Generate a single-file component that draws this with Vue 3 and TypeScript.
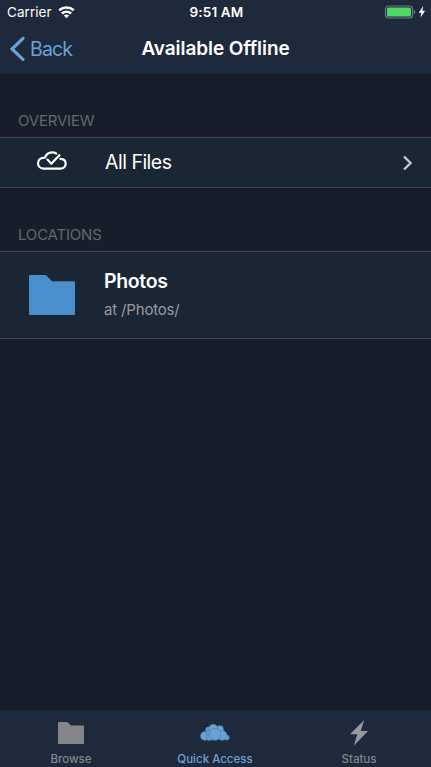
<script setup lang="ts">
interface Tab {
  id: string
  label: string
  active: boolean
}

const tabs: Tab[] = [
  { id: 'browse', label: 'Browse', active: false },
  { id: 'quick', label: 'Quick Access', active: true },
  { id: 'status', label: 'Status', active: false },
]
</script>

<template>
  <div class="screen">
    <header class="top">
      <div class="status-bar">
        <div class="side">
          <span class="carrier">Carrier</span>
          <svg class="wifi" width="17" height="13" viewBox="0 0 17 13">
            <g fill="none" stroke="#fff" stroke-width="2.5">
              <path d="M1.2 4.3C5.4 .6 11.6 .6 15.8 4.3" />
              <path d="M3.9 7.5C6.6 5.1 10.4 5.1 13.1 7.5" />
            </g>
            <path d="M5.8 9.5C7.4 8.1 9.6 8.1 11.2 9.5L8.5 12.2Z" fill="#fff" />
          </svg>
        </div>
        <span class="clock">9:51 AM</span>
        <div class="side right">
          <svg width="42" height="14" viewBox="0 0 42 14">
            <rect x="1.5" y="1" width="27" height="12" rx="3" fill="none" stroke="#737885" stroke-width="1.2" />
            <rect x="3" y="2.5" width="24" height="9" rx="1.5" fill="#4cd964" />
            <path d="M29.8 4.8C31.8 5.5 31.8 8.5 29.8 9.2Z" fill="#737885" />
            <path d="M39.3 1L34.6 7.8H37.4L36.4 12.6L41.2 5.7H38.3Z" fill="#fff" />
          </svg>
        </div>
      </div>
      <nav class="nav-bar">
        <button class="back">
          <svg width="16" height="26" viewBox="0 0 16 26">
            <path d="M14 2.3L3 13L14 23.3" fill="none" stroke="#66a3d9" stroke-width="3.2" stroke-linecap="round" />
          </svg>
          <span class="back-label">Back</span>
        </button>
        <h1><span class="title">Available Offline</span></h1>
      </nav>
    </header>

    <main>
      <h2 class="first"><span class="overview">OVERVIEW</span></h2>
      <section class="row all-files">
        <div class="icon-cell">
          <svg width="32" height="22" viewBox="0 0 32 22">
            <g fill="none" stroke="#fff" stroke-width="2.2" stroke-linecap="round" stroke-linejoin="round">
              <path d="M20.2 3.5C18.2 2.3 16.2 2.1 14.4 2.6C11.6 3.3 9.7 5.3 9 7.6C4.8 7.6 2 9.8 2 13C2 16.3 4.6 18.6 8 18.6H24.3C27.5 18.6 29.7 16.6 29.7 13.8C29.7 11 27.7 9 24.4 8.9" />
              <path d="M11.4 9.6L15.3 13.7L23.4 5.2" />
            </g>
          </svg>
        </div>
        <span class="files-label">All Files</span>
        <svg class="chevron" width="11" height="18" viewBox="0 0 11 18">
          <path d="M2 2.5L8.6 9L2 15.5" fill="none" stroke="#c6cbd2" stroke-width="2.3" />
        </svg>
      </section>

      <h2><span class="locations">LOCATIONS</span></h2>
      <section class="row location">
        <div class="icon-cell">
          <svg width="46" height="40" viewBox="0 0 46 40">
            <path d="M1.2 0H16.2Q17 0 17.6.7L23 6.3H44.8Q46 6.3 46 7.5V38.8Q46 40 44.8 40H1.2Q0 40 0 38.8V1.2Q0 0 1.2 0Z" fill="#488fcb" />
          </svg>
        </div>
        <div class="details">
          <span class="name">Photos</span>
          <span class="path">at /Photos/</span>
        </div>
      </section>
    </main>

    <footer>
      <button v-for="tab in tabs" :key="tab.id" class="tab" :class="[tab.id, { active: tab.active }]">
        <span class="glyph">
          <svg v-if="tab.id === 'browse'" width="26" height="22" viewBox="0 0 26 22">
            <path d="M.6 0H9.3L13 3.5H25.4Q26 3.5 26 4.1V21.4Q26 22 25.4 22H.6Q0 22 0 21.4V.6Q0 0 .6 0Z" fill="#85868a" />
          </svg>
          <svg v-else-if="tab.id === 'quick'" width="30" height="18" viewBox="0 0 30 18">
            <g fill="#69a3d5" stroke="#3f6a95" stroke-width=".5">
              <circle cx="8.7" cy="6" r="3.2" />
              <circle cx="19.7" cy="5.5" r="3.9" />
              <circle cx="13.3" cy="4.8" r="4.5" />
              <circle cx="4.9" cy="11.9" r="4.5" />
              <circle cx="9.1" cy="9.3" r="3.2" />
              <circle cx="9.6" cy="13.2" r="3.4" />
              <circle cx="26.6" cy="13.5" r="2.7" />
              <circle cx="22.2" cy="11.5" r="4.9" />
              <circle cx="15" cy="10.5" r="6" />
            </g>
          </svg>
          <svg v-else width="20" height="26" viewBox="0 0 20 26">
            <path d="M15.2 0L1 14.3H8.2L5 25.5L19 10.9H11.7Z" fill="#97999e" />
          </svg>
        </span>
        <span class="tab-label">{{ tab.label }}</span>
      </button>
    </footer>
  </div>
</template>

<style>
body {
  background: #171d2b;
}
</style>

<style scoped>
.screen {
  box-sizing: border-box;
  height: 100vh;
  display: flex;
  flex-direction: column;
  overflow: hidden;
  background: #171d2b;
  color: #fff;
  font-family: Inter, "Liberation Sans", sans-serif;
  white-space: nowrap;
}
svg {
  display: block;
  flex: none;
}
button {
  background: none;
  border: 0;
  padding: 0;
  font: inherit;
  color: inherit;
}
.top {
  height: 74px;
  box-sizing: border-box;
  background: #1e293b;
  border-bottom: 1px solid #19232f;
}
.status-bar {
  height: 24px;
  padding: 0 5px 0 7px;
  display: grid;
  grid-template-columns: 1fr auto 1fr;
  align-items: center;
  font-size: 13.5px;
}
.side {
  display: flex;
  align-items: center;
  gap: 6px;
}
.side.right {
  justify-content: flex-end;
}
.carrier {
  letter-spacing: 0.05px;
}
.clock {
  font-weight: 600;
  letter-spacing: 0.15px;
}
.nav-bar {
  height: 49px;
  display: grid;
  grid-template-columns: 1fr auto 1fr;
  align-items: center;
}
.back {
  display: flex;
  align-items: center;
  gap: 5px;
  padding-left: 9px;
  color: #66a3d9;
  font-size: 19.5px;
  letter-spacing: -0.85px;
}
h1 {
  margin: 0;
  font-size: 19px;
  font-weight: 600;
  letter-spacing: -0.08px;
}
h2 {
  margin: 0;
  height: 63px;
  box-sizing: border-box;
  padding: 38px 0 0 18px;
  color: #64676e;
  font-size: 15px;
  line-height: 18px;
  font-weight: 400;
  letter-spacing: -0.2px;
}
.row {
  box-sizing: border-box;
  display: flex;
  align-items: center;
  background: #1b2635;
  border-top: 1px solid #43484f;
  border-bottom: 1px solid #43484f;
}
.all-files {
  height: 51px;
  font-size: 19.5px;
  letter-spacing: -0.5px;
}
.icon-cell {
  width: 104px;
  flex: none;
  display: flex;
  justify-content: center;
}
.all-files .icon-cell {
  padding-bottom: 4px;
}
.files-label {
  padding: 0 0 1px 1px;
}
.chevron {
  margin-left: auto;
  margin-right: 18px;
}
.location {
  height: 88px;
}
.details {
  display: flex;
  flex-direction: column;
  align-items: flex-start;
  gap: 7px;
  padding-bottom: 1px;
}
.name {
  font-size: 19.5px;
  line-height: 24px;
  font-weight: 600;
  letter-spacing: -0.35px;
}
.path {
  font-size: 15px;
  line-height: 20px;
  color: #97999d;
  letter-spacing: -0.17px;
}
footer {
  margin-top: auto;
  height: 57px;
  box-sizing: border-box;
  display: grid;
  grid-template-columns: 142px 146px 1fr;
  border-top: 1px solid #19222f;
  background: #1e293b;
  color: #85868a;
}
.tab {
  display: flex;
  flex-direction: column;
  align-items: center;
  font-size: 11.5px;
  font-weight: 500;
}
.status {
  padding-right: 1px;
}
.glyph {
  height: 41px;
  padding-top: 2px;
  box-sizing: border-box;
  display: flex;
  align-items: center;
}
.tab-label {
  line-height: 14px;
}
.active {
  color: #69a3d5;
}
</style>
